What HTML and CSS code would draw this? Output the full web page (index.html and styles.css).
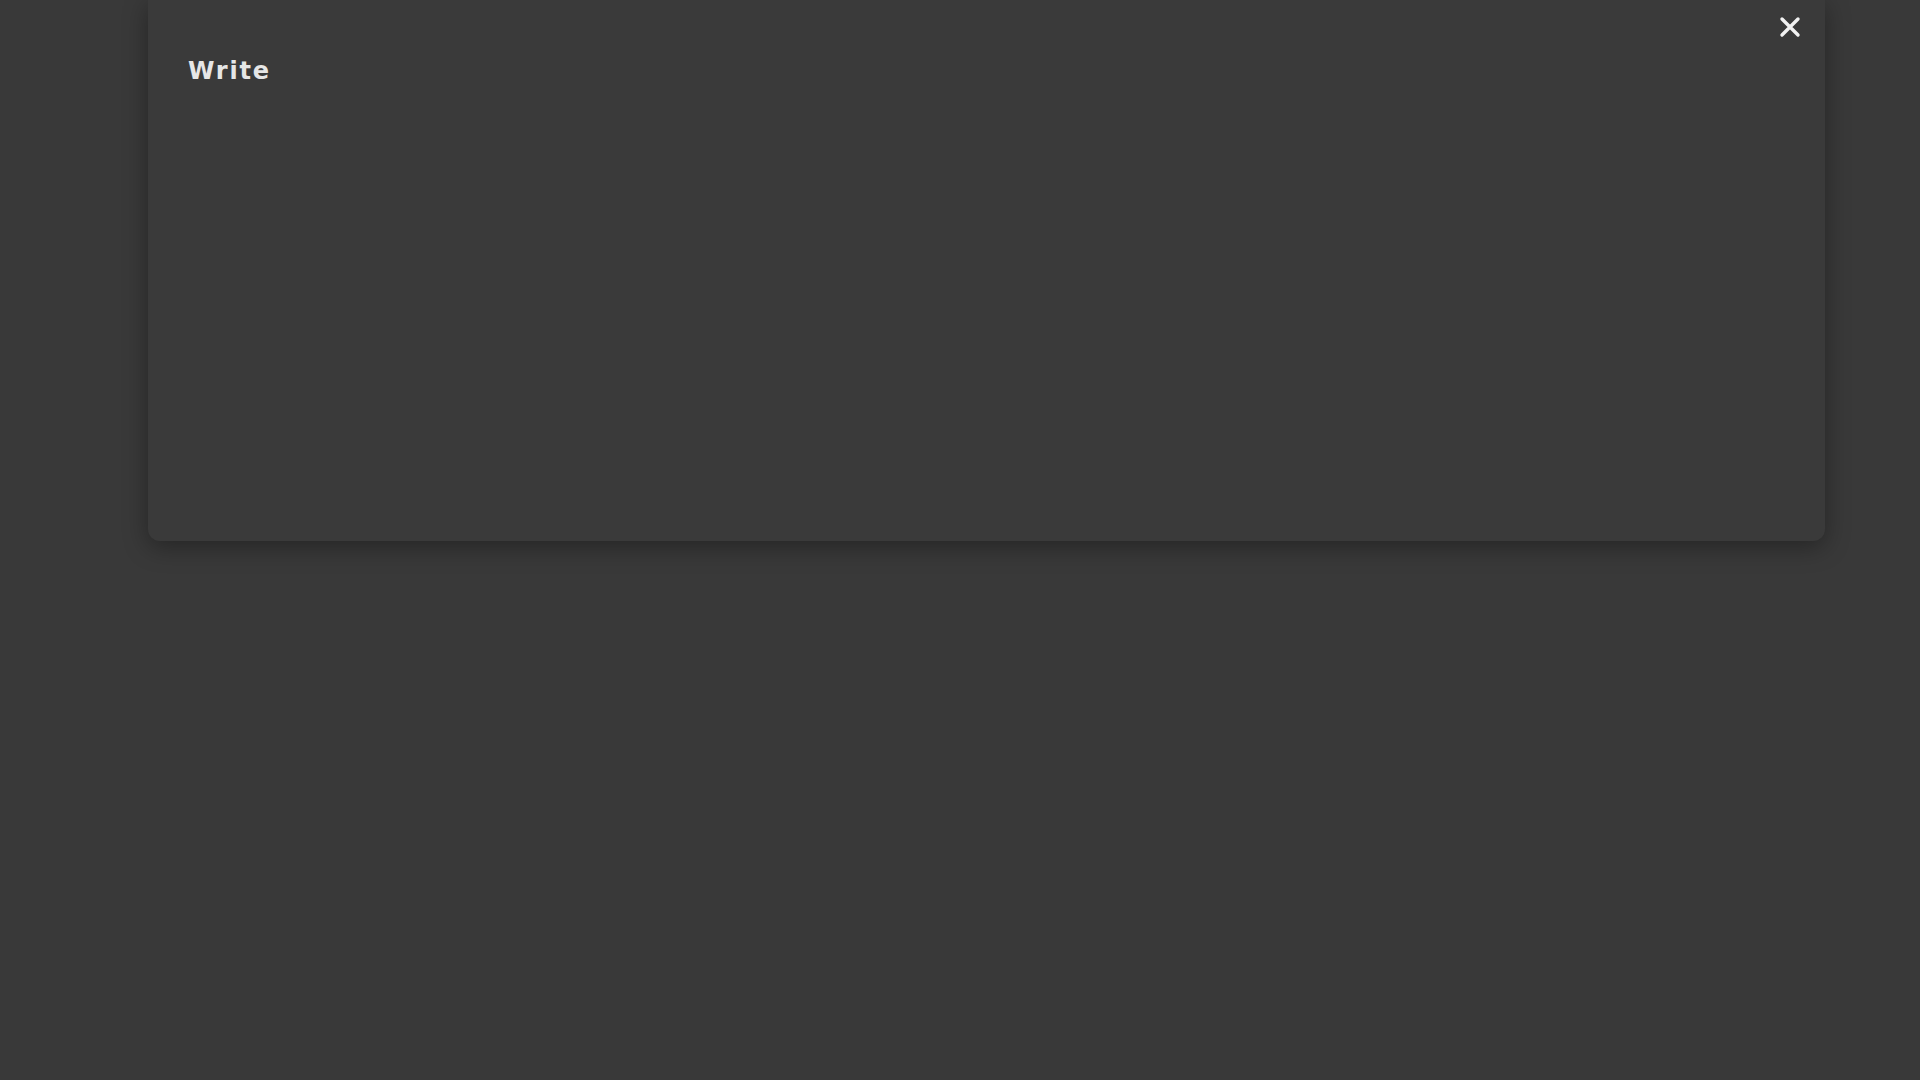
FILE: index.html
```html
<!DOCTYPE html>
<html lang="en">

<head>
    <meta charset="UTF-8">
    <meta name="viewport" content="width=device-width, initial-scale=1.0">
    <title>Write</title>
    <link rel="stylesheet" href="styles.css">
</head>

<body>
    <div class="modal">
        <h2 class="modal-title">Write</h2>
        <a href="javascript:;" class="modal-close" aria-label="Close">
            <svg viewBox="0 0 24 24" width="24" height="24">
                <path d="M4 4 L20 20 M20 4 L4 20" stroke="#f2f2f2" stroke-width="3.4" stroke-linecap="round" fill="none"/>
            </svg>
        </a>
    </div>
</body>

</html>
```

FILE: styles.css
```css
* {
    margin: 0;
    padding: 0;
    box-sizing: border-box;
}

body {
    background-color: #393939;
    font-family: "DejaVu Sans", "Liberation Sans", sans-serif;
    height: 100vh;
}

.modal {
    position: relative;
    width: 1677px;
    height: 541px;
    margin-left: 148px;
    padding: 57px 40px;
    background-color: #3a3a3a;
    border-radius: 0 0 12px 12px;
    box-shadow: 0 6px 24px rgba(0, 0, 0, 0.35);
}

.modal-title {
    color: #e6e6e6;
    font-size: 24px;
    font-weight: bold;
    letter-spacing: 1.8px;
    line-height: 28px;
}

/* 关闭按钮浮在右上角 */
.modal-close {
    position: absolute;
    top: 15px;
    right: 23px;
    display: block;
    width: 24px;
    height: 24px;
}

.modal-close svg {
    display: block;
}
```
